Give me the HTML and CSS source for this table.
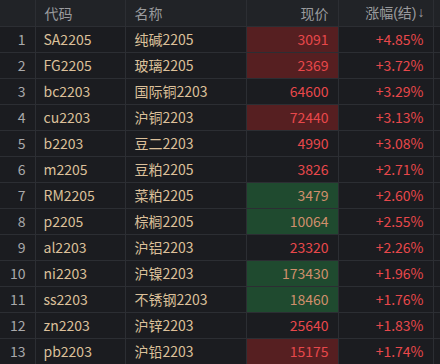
FILE: index.html
```html
<!DOCTYPE html>
<html>
<head>
<meta charset="utf-8">
<link rel="stylesheet" href="styles.css">
</head>
<body>
<table class="quotes">
  <colgroup>
    <col class="c-idx"><col class="c-code"><col class="c-name"><col class="c-price"><col class="c-chg"><col class="c-pad">
  </colgroup>
  <thead>
    <tr><th></th><th class="left">代码</th><th class="left">名称</th><th class="right">现价</th><th class="right">涨幅<span class="paren">(</span>结<span class="paren">)</span><span class="arrow">↓</span></th><th class="pad"></th></tr>
  </thead>
  <tbody>
    <tr><td class="idx">1</td><td class="code">SA2205</td><td class="name">纯碱2205</td><td class="price up-bg">3091</td><td class="chg">+4.85%</td><td class="pad"></td></tr>
    <tr><td class="idx">2</td><td class="code">FG2205</td><td class="name">玻璃2205</td><td class="price up-bg">2369</td><td class="chg">+3.72%</td><td class="pad"></td></tr>
    <tr><td class="idx">3</td><td class="code">bc2203</td><td class="name">国际铜2203</td><td class="price">64600</td><td class="chg">+3.29%</td><td class="pad"></td></tr>
    <tr><td class="idx">4</td><td class="code">cu2203</td><td class="name">沪铜2203</td><td class="price up-bg">72440</td><td class="chg">+3.13%</td><td class="pad"></td></tr>
    <tr><td class="idx">5</td><td class="code">b2203</td><td class="name">豆二2203</td><td class="price">4990</td><td class="chg">+3.08%</td><td class="pad"></td></tr>
    <tr><td class="idx">6</td><td class="code">m2205</td><td class="name">豆粕2205</td><td class="price">3826</td><td class="chg">+2.71%</td><td class="pad"></td></tr>
    <tr><td class="idx">7</td><td class="code">RM2205</td><td class="name">菜粕2205</td><td class="price dn-bg">3479</td><td class="chg">+2.60%</td><td class="pad"></td></tr>
    <tr><td class="idx">8</td><td class="code">p2205</td><td class="name">棕榈2205</td><td class="price dn-bg">10064</td><td class="chg">+2.55%</td><td class="pad"></td></tr>
    <tr><td class="idx">9</td><td class="code">al2203</td><td class="name">沪铝2203</td><td class="price">23320</td><td class="chg">+2.26%</td><td class="pad"></td></tr>
    <tr><td class="idx">10</td><td class="code">ni2203</td><td class="name">沪镍2203</td><td class="price dn-bg">173430</td><td class="chg">+1.96%</td><td class="pad"></td></tr>
    <tr><td class="idx">11</td><td class="code">ss2203</td><td class="name">不锈钢2203</td><td class="price dn-bg">18460</td><td class="chg">+1.76%</td><td class="pad"></td></tr>
    <tr><td class="idx">12</td><td class="code">zn2203</td><td class="name">沪锌2203</td><td class="price">25640</td><td class="chg">+1.83%</td><td class="pad"></td></tr>
    <tr><td class="idx">13</td><td class="code">pb2203</td><td class="name">沪铅2203</td><td class="price up-bg">15175</td><td class="chg">+1.74%</td><td class="pad"></td></tr>
  </tbody>
</table>
</body>
</html>
```
FILE: styles.css
```css
html, body {
  margin: 0;
  padding: 0;
  background: #1b1c20;
  overflow: hidden;
}
body {
  font-family: "Noto Sans CJK SC", "Noto Sans", sans-serif;
  font-size: 14px;
}
.quotes {
  border-collapse: collapse;
  table-layout: fixed;
  width: 440px;
}
.c-idx { width: 35px; }
.c-code { width: 90px; }
.c-name { width: 121px; }
.c-price { width: 92px; }
.c-chg { width: 95px; }
.c-pad { width: 7px; }
.quotes th, .quotes td {
  height: 25px;
  padding: 0;
  border: 1px solid #2c2e33;
  line-height: 25px;
  white-space: nowrap;
  overflow: hidden;
}
.quotes tr > :first-child { border-left: none; }
.quotes thead tr > * { border-top: none; }
.quotes th {
  background: #212327;
  color: #9a9b9e;
  font-weight: normal;
}
.quotes th.left { text-align: left; padding-left: 9px; }
.quotes th.right { text-align: right; padding-right: 9px; }
.paren {
  font-family: "Liberation Sans", sans-serif;
}
.arrow {
  font-family: "Liberation Sans", sans-serif;
  display: inline-block;
  width: 6px;
  overflow: hidden;
  text-align: center;
  vertical-align: top;
  margin-left: 1px;
}
.idx {
  color: #a9a9ab;
  text-align: right;
  padding-right: 9px !important;
}
.code {
  color: #dcc09a;
  padding-left: 8px !important;
}
.name {
  color: #dcc09a;
  padding-left: 9px !important;
}
.price {
  color: #e8484b;
  text-align: right;
  padding-right: 9px !important;
}
.chg {
  color: #e8484b;
  text-align: right;
  padding-right: 9px !important;
}
.up-bg { background: #561f21; }
.dn-bg { background: #1f4a2f; color: #d08f6c; }
.pad { border-right: none !important; }
```
